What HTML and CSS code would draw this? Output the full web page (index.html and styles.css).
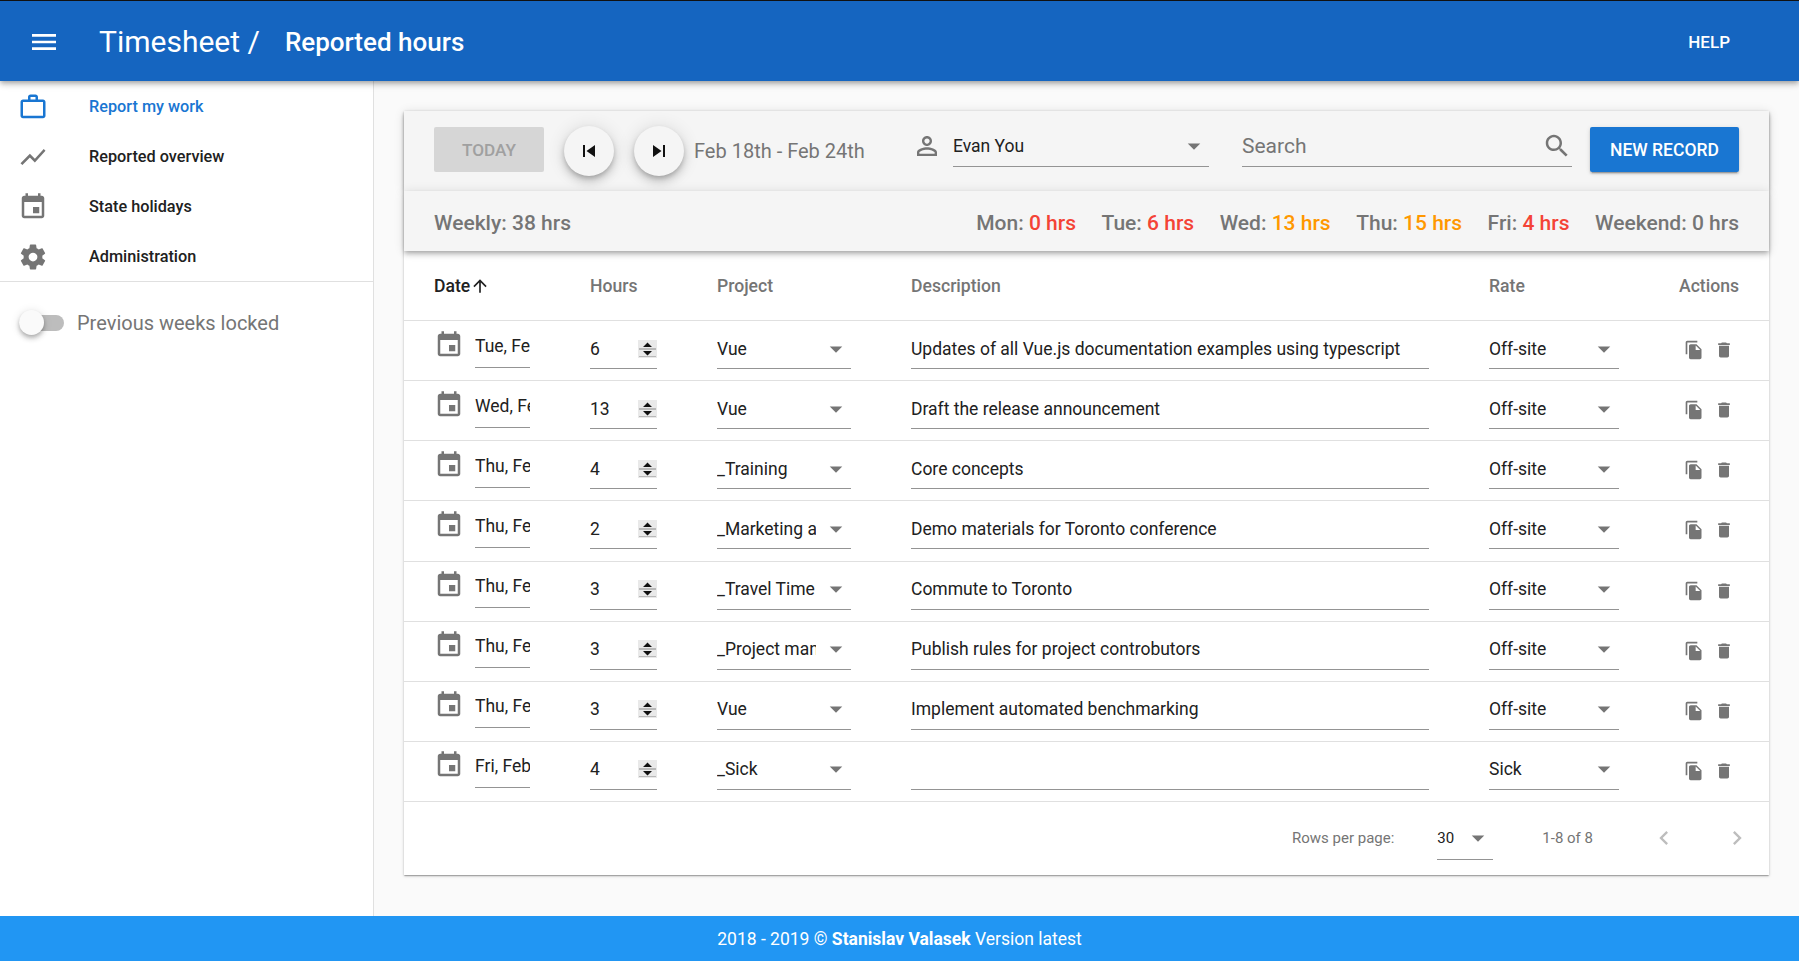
FILE: index.html
```html
<!DOCTYPE html>
<html>

	<head>
		<meta charset="UTF-8">
		<title>Timesheet</title>
		<link rel="stylesheet" href="styles.css">
	</head>

	<body>
		<svg class="defs" xmlns="http://www.w3.org/2000/svg">
			<symbol id="i-menu" viewBox="0 0 24 24"><path d="M3 18h18v-2H3v2zm0-5h18v-2H3v2zm0-7v2h18V6H3z"/></symbol>
			<symbol id="i-work" viewBox="0 0 24 24"><path d="M14 6V4h-4v2h4zM4 8v11h16V8H4zm16-2c1.11 0 2 .89 2 2v11c0 1.11-.89 2-2 2H4c-1.11 0-2-.89-2-2l.01-11c0-1.11.88-2 1.99-2h4V4c0-1.11.89-2 2-2h4c1.11 0 2 .89 2 2v2h4z"/></symbol>
			<symbol id="i-chart" viewBox="0 0 24 24"><path d="M3.5 18.49l6-6.01 4 4L22 6.92l-1.41-1.41-7.09 7.97-4-4L2 16.99z"/></symbol>
			<symbol id="i-event" viewBox="0 0 24 24"><path d="M17 12h-5v5h5v-5zM16 1v2H8V1H6v2H5c-1.11 0-1.99.9-1.99 2L3 19c0 1.1.89 2 2 2h14c1.1 0 2-.9 2-2V5c0-1.1-.9-2-2-2h-1V1h-2zm3 18H5V8h14v11z"/></symbol>
			<symbol id="i-gear" viewBox="0 0 24 24"><path d="M19.43 12.98c.04-.32.07-.64.07-.98s-.03-.66-.07-.98l2.11-1.65c.19-.15.24-.42.12-.64l-2-3.46c-.12-.22-.39-.3-.61-.22l-2.49 1c-.52-.4-1.08-.73-1.69-.98l-.38-2.65C14.46 2.18 14.25 2 14 2h-4c-.25 0-.46.18-.49.42l-.38 2.65c-.61.25-1.17.59-1.69.98l-2.49-1c-.23-.09-.49 0-.61.22l-2 3.46c-.13.22-.07.49.12.64l2.11 1.65c-.04.32-.07.65-.07.98s.03.66.07.98l-2.11 1.65c-.19.15-.24.42-.12.64l2 3.46c.12.22.39.3.61.22l2.49-1c.52.4 1.08.73 1.69.98l.38 2.65c.03.24.24.42.49.42h4c.25 0 .46-.18.49-.42l.38-2.65c.61-.25 1.17-.59 1.69-.98l2.49 1c.23.09.49 0 .61-.22l2-3.46c.12-.22.07-.49-.12-.64l-2.11-1.65zM12 15.5c-1.93 0-3.5-1.57-3.5-3.5s1.57-3.5 3.5-3.5 3.5 1.57 3.5 3.5-1.57 3.5-3.5 3.5z"/></symbol>
			<symbol id="i-prev" viewBox="0 0 24 24"><path d="M6 6h2v12H6zm3.5 6l8.5 6V6z"/></symbol>
			<symbol id="i-next" viewBox="0 0 24 24"><path d="M6 18l8.5-6L6 6v12zM16 6v12h2V6h-2z"/></symbol>
			<symbol id="i-person" viewBox="0 0 24 24"><path d="M12 5.9c1.16 0 2.1.94 2.1 2.1s-.94 2.1-2.1 2.1S9.9 9.16 9.9 8s.94-2.1 2.1-2.1m0 9c2.97 0 6.1 1.46 6.1 2.1v1.1H5.9V17c0-.64 3.13-2.1 6.1-2.1M12 4C9.79 4 8 5.79 8 8s1.79 4 4 4 4-1.79 4-4-1.79-4-4-4zm0 9c-2.67 0-8 1.34-8 4v3h16v-3c0-2.66-5.33-4-8-4z"/></symbol>
			<symbol id="i-search" viewBox="0 0 24 24"><path d="M15.5 14h-.79l-.28-.27C15.41 12.59 16 11.11 16 9.5 16 5.91 13.09 3 9.5 3S3 5.91 3 9.5 5.91 16 9.5 16c1.61 0 3.09-.59 4.23-1.57l.27.28v.79l5 4.99L20.49 19l-4.99-5zm-6 0C7.01 14 5 11.99 5 9.5S7.01 5 9.5 5 14 7.01 14 9.5 11.99 14 9.5 14z"/></symbol>
			<symbol id="i-up" viewBox="0 0 24 24"><path d="M4 12l1.41 1.41L11 7.83V20h2V7.83l5.58 5.59L20 12l-8-8-8 8z"/></symbol>
			<symbol id="i-drop" viewBox="0 0 24 24"><path d="M7 10l5 5 5-5z"/></symbol>
			<symbol id="i-copy" viewBox="0 0 24 24"><path d="M16 1H4c-1.1 0-2 .9-2 2v14h2V3h12V1zm-1 4l6 6v10c0 1.1-.9 2-2 2H7.99C6.89 23 6 22.1 6 21l.01-14c0-1.1.89-2 1.99-2h7zm-1 7h5.5L14 6.5V12z"/></symbol>
			<symbol id="i-trash" viewBox="0 0 24 24"><path d="M6 19c0 1.1.9 2 2 2h8c1.1 0 2-.9 2-2V7H6v12zM19 4h-3.500l-1-1h-5l-1 1H5v2h14V4z"/></symbol>
			<symbol id="i-left" viewBox="0 0 24 24"><path d="M15.41 7.41L14 6l-6 6 6 6 1.41-1.41L10.83 12z"/></symbol>
			<symbol id="i-right" viewBox="0 0 24 24"><path d="M10 6L8.59 7.41 13.17 12l-4.58 4.59L10 18l6-6z"/></symbol>
			<symbol id="i-spin" viewBox="0 0 19 18"><path fill="#e9e9e9" d="M0 0h19v18H0z"/><path fill="#b9b9b9" d="M1 8h17v2H1zM1 16h17v1H1z"/><path fill="#111" d="M9.500 2.500l4.500 4.500H5zM5 11h9l-4.500 4.500z"/></symbol>
		</svg>

		<header class="topbar">
			<svg class="menu-icon"><use href="#i-menu"/></svg>
			<span class="title">Timesheet /</span>
			<span class="subtitle">Reported hours</span>
			<span class="help">HELP</span>
		</header>

		<div class="main">
			<!--left menu-->
			<aside class="sidebar">
				<nav class="nav">
					<a class="nav-item active"><svg><use href="#i-work"/></svg><span>Report my work</span></a>
					<a class="nav-item"><svg><use href="#i-chart"/></svg><span>Reported overview</span></a>
					<a class="nav-item"><svg><use href="#i-event"/></svg><span>State holidays</span></a>
					<a class="nav-item"><svg><use href="#i-gear"/></svg><span>Administration</span></a>
				</nav>
				<div class="lock">
					<span class="switch"><span class="thumb"></span></span>
					<span>Previous weeks locked</span>
				</div>
			</aside>

			<section class="content">
				<div class="card">
					<div class="toolbar">
						<button class="today">TODAY</button>
						<button class="round"><svg><use href="#i-prev"/></svg></button>
						<button class="round"><svg><use href="#i-next"/></svg></button>
						<span class="range">Feb 18th - Feb 24th</span>
						<svg class="person"><use href="#i-person"/></svg>
						<div class="field user-field"><span class="value">Evan You</span><svg class="drop"><use href="#i-drop"/></svg></div>
						<div class="field search-field"><span class="placeholder">Search</span><svg class="glass"><use href="#i-search"/></svg></div>
						<button class="new-record">NEW RECORD</button>
					</div>

					<div class="summary">
						<span>Weekly: 38 hrs</span>
						<div class="days">
							<span>Mon: <b class="low">0 hrs</b></span>
							<span>Tue: <b class="low">6 hrs</b></span>
							<span>Wed: <b class="high">13 hrs</b></span>
							<span>Thu: <b class="high">15 hrs</b></span>
							<span>Fri: <b class="low">4 hrs</b></span>
							<span>Weekend: 0 hrs</span>
						</div>
					</div>

					<div class="row head">
						<span class="sorted">Date<svg><use href="#i-up"/></svg></span>
						<span>Hours</span>
						<span>Project</span>
						<span>Description</span>
						<span>Rate</span>
						<span class="actions-head">Actions</span>
					</div>

					<div class="row">
						<div class="date"><svg><use href="#i-event"/></svg><span>Tue, Feb 19th</span></div>
						<div class="field hours"><span>6</span><svg class="spin"><use href="#i-spin"/></svg></div>
						<div class="field project"><span>Vue</span><svg class="drop"><use href="#i-drop"/></svg></div>
						<div class="field desc">Updates of all Vue.js documentation examples using typescript</div>
						<div class="field rate"><span>Off-site</span><svg class="drop"><use href="#i-drop"/></svg></div>
						<div class="actions"><svg><use href="#i-copy"/></svg><svg><use href="#i-trash"/></svg></div>
					</div>
					<div class="row">
						<div class="date"><svg><use href="#i-event"/></svg><span>Wed, Feb 20th</span></div>
						<div class="field hours"><span>13</span><svg class="spin"><use href="#i-spin"/></svg></div>
						<div class="field project"><span>Vue</span><svg class="drop"><use href="#i-drop"/></svg></div>
						<div class="field desc">Draft the release announcement</div>
						<div class="field rate"><span>Off-site</span><svg class="drop"><use href="#i-drop"/></svg></div>
						<div class="actions"><svg><use href="#i-copy"/></svg><svg><use href="#i-trash"/></svg></div>
					</div>
					<div class="row">
						<div class="date"><svg><use href="#i-event"/></svg><span>Thu, Feb 21st</span></div>
						<div class="field hours"><span>4</span><svg class="spin"><use href="#i-spin"/></svg></div>
						<div class="field project"><span>_Training</span><svg class="drop"><use href="#i-drop"/></svg></div>
						<div class="field desc">Core concepts</div>
						<div class="field rate"><span>Off-site</span><svg class="drop"><use href="#i-drop"/></svg></div>
						<div class="actions"><svg><use href="#i-copy"/></svg><svg><use href="#i-trash"/></svg></div>
					</div>
					<div class="row">
						<div class="date"><svg><use href="#i-event"/></svg><span>Thu, Feb 21st</span></div>
						<div class="field hours"><span>2</span><svg class="spin"><use href="#i-spin"/></svg></div>
						<div class="field project"><span>_Marketing and PR</span><svg class="drop"><use href="#i-drop"/></svg></div>
						<div class="field desc">Demo materials for Toronto conference</div>
						<div class="field rate"><span>Off-site</span><svg class="drop"><use href="#i-drop"/></svg></div>
						<div class="actions"><svg><use href="#i-copy"/></svg><svg><use href="#i-trash"/></svg></div>
					</div>
					<div class="row">
						<div class="date"><svg><use href="#i-event"/></svg><span>Thu, Feb 21st</span></div>
						<div class="field hours"><span>3</span><svg class="spin"><use href="#i-spin"/></svg></div>
						<div class="field project"><span>_Travel Time</span><svg class="drop"><use href="#i-drop"/></svg></div>
						<div class="field desc">Commute to Toronto</div>
						<div class="field rate"><span>Off-site</span><svg class="drop"><use href="#i-drop"/></svg></div>
						<div class="actions"><svg><use href="#i-copy"/></svg><svg><use href="#i-trash"/></svg></div>
					</div>
					<div class="row">
						<div class="date"><svg><use href="#i-event"/></svg><span>Thu, Feb 21st</span></div>
						<div class="field hours"><span>3</span><svg class="spin"><use href="#i-spin"/></svg></div>
						<div class="field project"><span>_Project management</span><svg class="drop"><use href="#i-drop"/></svg></div>
						<div class="field desc">Publish rules for project controbutors</div>
						<div class="field rate"><span>Off-site</span><svg class="drop"><use href="#i-drop"/></svg></div>
						<div class="actions"><svg><use href="#i-copy"/></svg><svg><use href="#i-trash"/></svg></div>
					</div>
					<div class="row">
						<div class="date"><svg><use href="#i-event"/></svg><span>Thu, Feb 21st</span></div>
						<div class="field hours"><span>3</span><svg class="spin"><use href="#i-spin"/></svg></div>
						<div class="field project"><span>Vue</span><svg class="drop"><use href="#i-drop"/></svg></div>
						<div class="field desc">Implement automated benchmarking</div>
						<div class="field rate"><span>Off-site</span><svg class="drop"><use href="#i-drop"/></svg></div>
						<div class="actions"><svg><use href="#i-copy"/></svg><svg><use href="#i-trash"/></svg></div>
					</div>
					<div class="row">
						<div class="date"><svg><use href="#i-event"/></svg><span>Fri, Feb 22nd</span></div>
						<div class="field hours"><span>4</span><svg class="spin"><use href="#i-spin"/></svg></div>
						<div class="field project"><span>_Sick</span><svg class="drop"><use href="#i-drop"/></svg></div>
						<div class="field desc"></div>
						<div class="field rate"><span>Sick</span><svg class="drop"><use href="#i-drop"/></svg></div>
						<div class="actions"><svg><use href="#i-copy"/></svg><svg><use href="#i-trash"/></svg></div>
					</div>

					<div class="pager">
						<span>Rows per page:</span>
						<div class="per-page"><span>30</span><svg class="drop"><use href="#i-drop"/></svg></div>
						<span class="count">1-8 of 8</span>
						<svg class="chev"><use href="#i-left"/></svg>
						<svg class="chev chev-next"><use href="#i-right"/></svg>
					</div>
				</div>
			</section>
		</div>

		<footer class="footer">2018 - 2019 © <b>Stanislav Valasek</b>&nbsp;Version latest</footer>
	</body>

</html>
```

FILE: styles.css
```css
* {
	margin: 0;
	padding: 0;
	box-sizing: border-box;
}

body {
	height: 961px;
	display: flex;
	flex-direction: column;
	overflow: hidden;
	font-family: Roboto, "Liberation Sans", sans-serif;
	color: #212121;
	background: #fafafa;
}

svg {
	fill: currentColor;
	flex: none;
}

.defs {
	display: none;
}

/*top bar*/

.topbar {
	height: 81px;
	flex: none;
	display: flex;
	align-items: center;
	padding: 1px 0 0 28px;
	border-top: 1px solid #111;
	background: #1565c0;
	color: #fff;
	position: relative;
	z-index: 2;
	box-shadow: 0 2px 4px -1px rgba(0, 0, 0, .2), 0 4px 5px 0 rgba(0, 0, 0, .14), 0 1px 10px 0 rgba(0, 0, 0, .12);
}

.menu-icon {
	width: 32px;
	height: 32px;
}

.title {
	margin-left: 39px;
	font-size: 30px;
}

.subtitle {
	margin-left: 25px;
	font-size: 26px;
	font-weight: 500;
}

.help {
	margin-left: auto;
	margin-right: 69px;
	font-size: 17px;
	font-weight: 500;
}

.main {
	flex: 1;
	display: flex;
	min-height: 0;
}

/*left menu*/

.sidebar {
	width: 374px;
	flex: none;
	background: #fff;
	border-right: 1px solid #e0e0e0;
}

.nav {
	border-bottom: 1px solid #e0e0e0;
}

.nav-item {
	height: 50px;
	display: flex;
	align-items: center;
	padding: 1px 0 0 18px;
	font-size: 16.25px;
	font-weight: 500;
	color: #212121;
}

.nav-item svg {
	width: 30px;
	height: 30px;
	margin-right: 41px;
	color: #757575;
}

.nav-item.active,
.nav-item.active svg {
	color: #1976d2;
}

.lock {
	height: 82px;
	display: flex;
	align-items: center;
	padding-left: 19px;
	font-size: 20px;
	color: #757575;
}

.switch {
	width: 45px;
	height: 16px;
	margin-right: 13px;
	border-radius: 8px;
	background: #bdbdbd;
	position: relative;
}

.thumb {
	position: absolute;
	left: 0;
	top: -5px;
	width: 25px;
	height: 25px;
	border-radius: 50%;
	background: #fafafa;
	box-shadow: 0 2px 4px -1px rgba(0, 0, 0, .2), 0 4px 5px 0 rgba(0, 0, 0, .14), 0 1px 10px 0 rgba(0, 0, 0, .12);
}

/*content*/

.content {
	flex: 1;
	min-width: 0;
	padding: 30px;
}

.card {
	background: #fff;
	box-shadow: 0 1px 3px 0 rgba(0, 0, 0, .2), 0 1px 1px 0 rgba(0, 0, 0, .14), 0 2px 1px -1px rgba(0, 0, 0, .12);
}

.toolbar {
	height: 80px;
	display: flex;
	align-items: center;
	padding: 0 30px;
	background: #f5f5f5;
	position: relative;
	box-shadow: 0 2px 4px -1px rgba(0, 0, 0, .2), 0 4px 5px 0 rgba(0, 0, 0, .14), 0 1px 10px 0 rgba(0, 0, 0, .12);
}

button {
	border: 0;
	font-family: inherit;
	font-size: 17.5px;
	font-weight: 500;
}

.today {
	width: 110px;
	height: 45px;
	margin-bottom: 3px;
	border-radius: 2px;
	background: #d6d6d6;
	color: #a0a0a0;
	font-size: 17.2px;
}

.round {
	width: 50px;
	height: 50px;
	margin-left: 20px;
	display: flex;
	align-items: center;
	justify-content: center;
	border-radius: 50%;
	background: #f5f5f5;
	color: #111;
	box-shadow: 0 3px 5px -1px rgba(0, 0, 0, .2), 0 6px 10px 0 rgba(0, 0, 0, .14), 0 1px 18px 0 rgba(0, 0, 0, .12);
}

.round svg {
	width: 24px;
	height: 24px;
}

.range {
	width: 218px;
	margin-left: 10px;
	font-size: 20px;
	color: #757575;
}

.person {
	width: 30px;
	height: 30px;
	margin-bottom: 10px;
	color: #757575;
}

.field {
	display: flex;
	align-items: center;
	height: 37px;
	padding-bottom: 3px;
	font-size: 17.5px;
	border-bottom: 1px solid #949494;
	white-space: nowrap;
}

.user-field {
	width: 256px;
	margin: 0 33px 5px 11px;
	padding-bottom: 4px;
	justify-content: space-between;
}

.search-field {
	width: 330px;
	margin-bottom: 5px;
	padding-bottom: 4px;
	justify-content: space-between;
}

.placeholder {
	font-size: 21px;
	color: #757575;
}

.drop {
	width: 30px;
	height: 30px;
	color: #757575;
}

.glass {
	width: 30px;
	height: 30px;
	color: #757575;
}

.new-record {
	width: 149px;
	height: 45px;
	margin-left: 18px;
	margin-bottom: 3px;
	border-radius: 2px;
	background: #1976d2;
	color: #fff;
	box-shadow: 0 3px 1px -2px rgba(0, 0, 0, .2), 0 2px 2px 0 rgba(0, 0, 0, .14), 0 1px 5px 0 rgba(0, 0, 0, .12);
}

.summary {
	height: 60px;
	display: flex;
	align-items: center;
	justify-content: space-between;
	padding: 4px 30px 0;
	background: #f5f5f5;
	font-size: 21px;
	font-weight: 500;
	color: #757575;
	position: relative;
	box-shadow: 0 2px 4px -1px rgba(0, 0, 0, .2), 0 4px 5px 0 rgba(0, 0, 0, .14), 0 1px 10px 0 rgba(0, 0, 0, .12);
}

.days {
	display: flex;
	gap: 25.5px;
}

.days b {
	font-weight: 500;
}

.low {
	color: #f44336;
}

.high {
	color: #ff9800;
}

/*table*/

.row {
	height: 60.125px;
	display: grid;
	grid-template-columns: 156px 127px 194px 578px 150px 1fr;
	align-items: center;
	padding: 0 30px;
	border-bottom: 1px solid #e0e0e0;
	font-size: 17.5px;
}

.head {
	height: 70px;
	font-size: 17.6px;
	font-weight: 500;
	color: #757575;
}

.sorted {
	display: flex;
	align-items: center;
	color: #212121;
}

.sorted svg {
	width: 20px;
	height: 20px;
}

.actions-head {
	justify-self: end;
	white-space: nowrap;
}

.date {
	display: flex;
	align-items: flex-start;
	height: 38px;
	margin-bottom: 4px;
}

.date svg {
	width: 30px;
	height: 30px;
	color: #757575;
}

.date span {
	width: 55px;
	height: 36px;
	margin: 2px 0 0 11px;
	line-height: 29px;
	overflow: hidden;
	white-space: nowrap;
	border-bottom: 1px solid #949494;
}

.hours {
	width: 67px;
	justify-content: space-between;
}

.spin {
	width: 19px;
	height: 18px;
}

.project {
	width: 134px;
}

.project span {
	width: 99px;
	overflow: hidden;
}

.desc {
	width: 518px;
}

.rate {
	width: 130px;
	justify-content: space-between;
}

.row .drop {
	margin-left: auto;
}

.actions {
	display: flex;
	justify-content: flex-end;
	gap: 10px;
	padding-right: 5px;
	margin-bottom: 1px;
	color: #757575;
}

.actions svg {
	width: 20px;
	height: 20px;
}

.pager {
	height: 73px;
	display: flex;
	align-items: center;
	padding: 0 0 1px 888px;
	font-size: 15px;
	color: #757575;
}

.per-page {
	width: 56px;
	height: 42px;
	margin: 1px 0 0 43px;
	padding-bottom: 1px;
	display: flex;
	align-items: center;
	justify-content: space-between;
	border-bottom: 1px solid #949494;
	color: #212121;
	font-size: 15px;
}

.count {
	margin-left: 49px;
}

.chev {
	width: 28px;
	height: 28px;
	color: #bdbdbd;
	margin-left: 57px;
}

.chev-next {
	margin-left: 45px;
}

.footer {
	height: 45px;
	flex: none;
	display: flex;
	align-items: center;
	justify-content: center;
	background: #2196f3;
	color: #fff;
	font-size: 17.5px;
	white-space: pre-wrap;
}
```
